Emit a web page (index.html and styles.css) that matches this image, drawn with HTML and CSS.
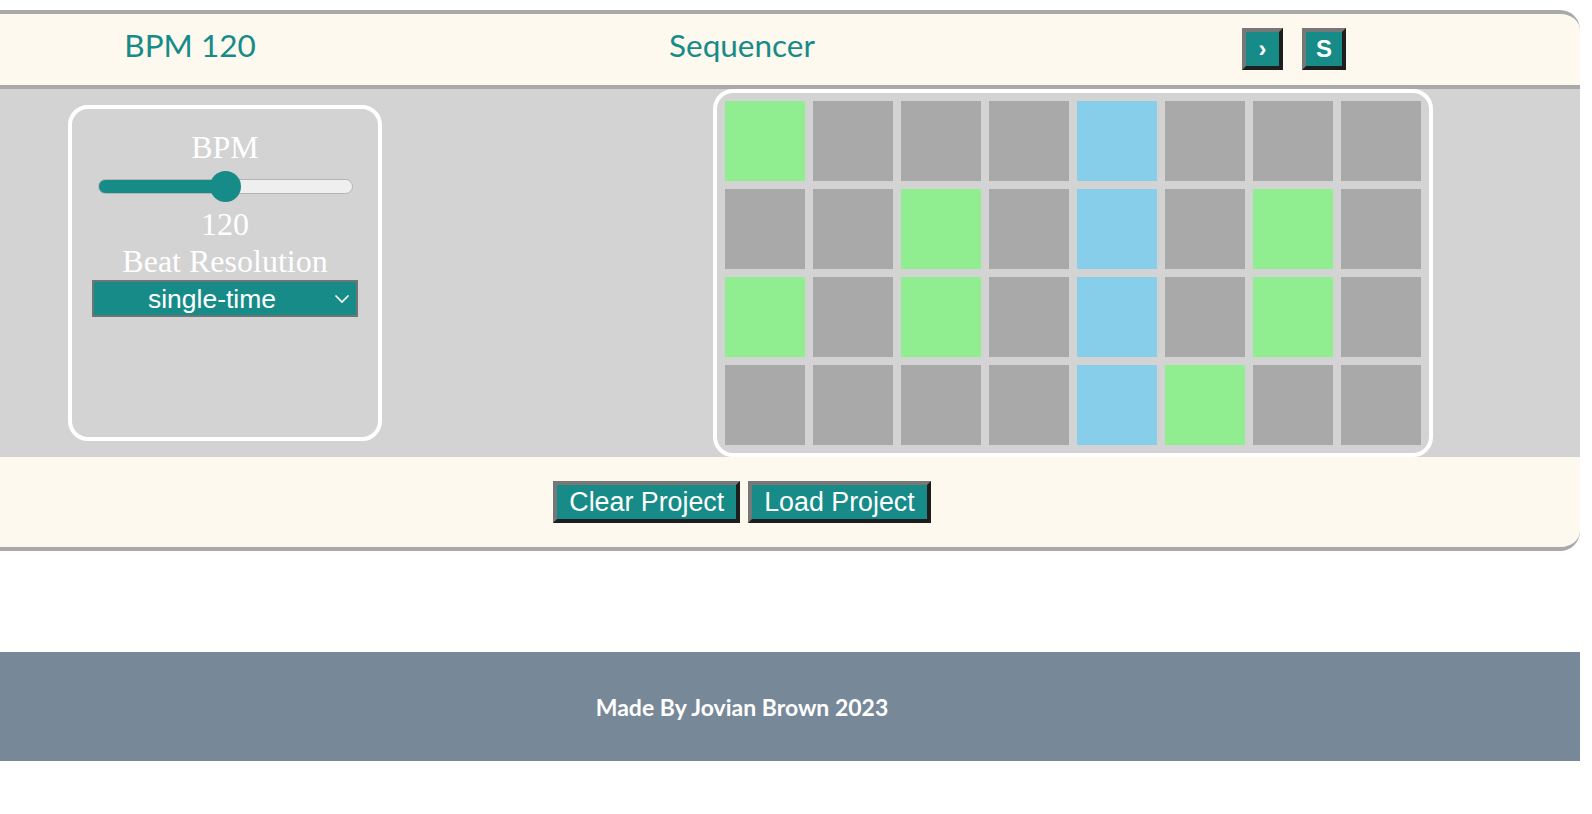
FILE: index.html
```html
<!DOCTYPE html>
<html lang="en">
<head>
<meta charset="utf-8">
<title>Sequencer</title>
<link rel="stylesheet" href="styles.css">
</head>
<body>
<div class="page">
  <div class="app">
    <header class="topbar">
      <div class="bpm-title">BPM 120</div>
      <h1 class="title">Sequencer</h1>
      <div class="transport">
        <button class="tbtn tbtn-play">›</button>
        <button class="tbtn">S</button>
      </div>
    </header>
    <main class="workspace">
      <section class="controls">
        <div class="ctl-label">BPM</div>
        <input class="bpm-slider" type="range" min="40" max="200" value="120">
        <div class="ctl-label">120</div>
        <div class="ctl-label">Beat Resolution</div>
        <div class="select-wrap">
          <select class="res-select">
            <option>single-time</option>
            <option>double-time</option>
          </select>
          <svg class="chev" width="16" height="10" viewBox="0 0 16 10"><path d="M1.5 1.5 L8 8 L14.5 1.5" fill="none" stroke="#fff" stroke-width="1.6"/></svg>
        </div>
      </section>
      <section class="grid-box">
        <div class="grid">
          <div class="cell on"></div><div class="cell"></div><div class="cell"></div><div class="cell"></div><div class="cell play"></div><div class="cell"></div><div class="cell"></div><div class="cell"></div>
          <div class="cell"></div><div class="cell"></div><div class="cell on"></div><div class="cell"></div><div class="cell play"></div><div class="cell"></div><div class="cell on"></div><div class="cell"></div>
          <div class="cell on"></div><div class="cell"></div><div class="cell on"></div><div class="cell"></div><div class="cell play"></div><div class="cell"></div><div class="cell on"></div><div class="cell"></div>
          <div class="cell"></div><div class="cell"></div><div class="cell"></div><div class="cell"></div><div class="cell play"></div><div class="cell on"></div><div class="cell"></div><div class="cell"></div>
        </div>
      </section>
    </main>
    <div class="project-bar">
      <button class="pbtn">Clear Project</button>
      <button class="pbtn">Load Project</button>
    </div>
  </div>
  <footer class="site-footer">Made By Jovian Brown 2023</footer>
</div>
</body>
</html>
```

FILE: styles.css
```css
html, body {
  margin: 0;
  padding: 0;
  background: #ffffff;
}

.page {
  margin: 10px 12px 0 0;
}

.app {
  background: #d3d3d3;
  border-top: 4px solid #a9a9a9;
  border-bottom: 4px solid #a9a9a9;
  border-radius: 0 20px 20px 0;
  overflow: hidden;
}

/* ---------- top bar ---------- */
.topbar {
  box-sizing: border-box;
  height: 75px;
  padding: 12px 96px 0 0;
  background: #fdf9ef;
  border-bottom: 4px solid #a9a9a9;
  display: grid;
  grid-template-columns: 380px 1fr 380px;
  align-items: start;
}

.bpm-title,
.title {
  margin: 0;
  font-family: "Lato", "Open Sans", sans-serif;
  font-weight: 400;
  font-size: 31.5px;
  line-height: 38px;
  color: #168b88;
  text-align: center;
}

.transport {
  display: flex;
  justify-content: center;
  gap: 19px;
  margin-top: 2px;
}

.tbtn {
  box-sizing: border-box;
  min-width: 41px;
  height: 42px;
  padding: 0 10px;
  background: #168b88;
  color: #ffffff;
  font-family: "Liberation Sans", Arial, sans-serif;
  font-weight: 700;
  font-size: 24px;
  line-height: 34px;
  border: 4px solid;
  border-color: #777777 #1e1e1e #1e1e1e #777777;
  cursor: pointer;
}

/* ---------- workspace ---------- */
.workspace {
  display: flex;
  align-items: center;
  padding: 0 147px 0 68px;
}

.controls {
  box-sizing: border-box;
  width: 314px;
  height: 336px;
  border: 4px solid #ffffff;
  border-radius: 20px;
  padding-top: 20px;
  display: flex;
  flex-direction: column;
  align-items: center;
}

.ctl-label {
  font-family: "Liberation Serif", "Times New Roman", serif;
  font-size: 32px;
  line-height: 36.8px;
  color: #ffffff;
}

.bpm-slider {
  -webkit-appearance: none;
  appearance: none;
  width: 255px;
  height: 31px;
  margin: 5px 0 4px;
  padding: 0;
  background: transparent;
}

.bpm-slider::-webkit-slider-runnable-track {
  box-sizing: border-box;
  height: 15px;
  border-radius: 8px;
  border: 1px solid #b4b4b4;
  background: linear-gradient(to right, #168b88 0, #168b88 50%, #efefef 50%, #efefef 100%);
}

.bpm-slider::-webkit-slider-thumb {
  -webkit-appearance: none;
  appearance: none;
  width: 31px;
  height: 31px;
  margin-top: -9px;
  border-radius: 50%;
  background: #168b88;
  border: none;
}

.select-wrap {
  position: relative;
  margin-top: 1px;
}

.res-select {
  -webkit-appearance: none;
  appearance: none;
  box-sizing: border-box;
  display: block;
  width: 266px;
  height: 37px;
  padding: 0 26px 0 0;
  margin: 0;
  border: 2px solid #6f7474;
  border-radius: 0;
  background: #168b88;
  color: #ffffff;
  font-family: "Liberation Sans", Arial, sans-serif;
  font-size: 26.5px;
  text-align: center;
  text-align-last: center;
}

.chev {
  position: absolute;
  right: 8px;
  top: 14px;
  pointer-events: none;
}

.grid-box {
  margin-left: auto;
  border: 4px solid #ffffff;
  border-radius: 20px;
  padding: 8px;
}

.grid {
  display: grid;
  grid-template-columns: repeat(8, 80px);
  grid-auto-rows: 80px;
  gap: 8px;
}

.cell {
  background: #a9a9a9;
}

.cell.on {
  background: #90ee90;
}

.cell.play {
  background: #87ceeb;
}

/* ---------- project bar ---------- */
.project-bar {
  height: 90px;
  background: #fdf9ef;
  padding-right: 96px;
  display: flex;
  justify-content: center;
  align-items: center;
  gap: 8px;
}

.pbtn {
  box-sizing: border-box;
  height: 42px;
  padding: 0 12px;
  background: #168b88;
  color: #ffffff;
  font-family: "Liberation Sans", Arial, sans-serif;
  font-size: 26.8px;
  line-height: 34px;
  border: 4px solid;
  border-color: #777777 #1e1e1e #1e1e1e #777777;
  cursor: pointer;
}

/* ---------- footer ---------- */
.site-footer {
  margin-top: 101px;
  height: 109px;
  padding-right: 96px;
  background: #778899;
  color: #ffffff;
  font-family: "Lato", "Open Sans", sans-serif;
  font-weight: 700;
  font-size: 23px;
  display: flex;
  justify-content: center;
  align-items: center;
}
```
